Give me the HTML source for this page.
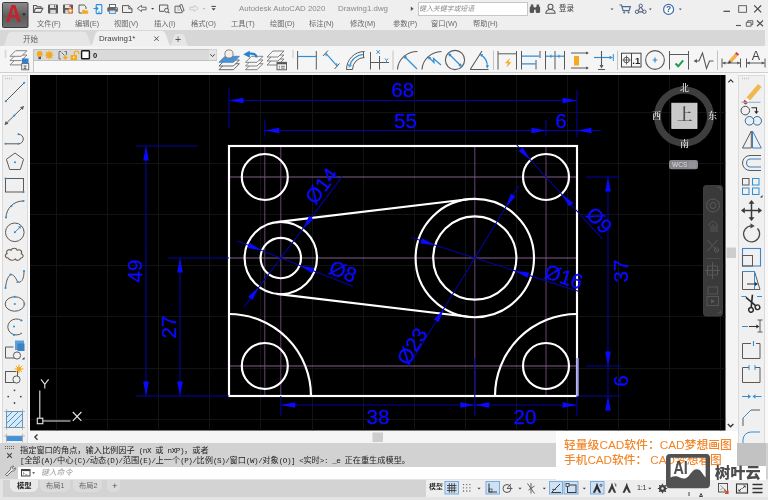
<!DOCTYPE html><html lang="zh"><head><meta charset="utf-8"><title>Autodesk AutoCAD 2020 - Drawing1.dwg</title><style>
*{margin:0;padding:0;box-sizing:border-box}
html,body{width:768px;height:500px;overflow:hidden;background:#f0f0f0}
body{position:relative;font-family:"Liberation Sans","Noto Sans CJK SC",sans-serif;font-size:8.5px;color:#444}
.a{position:absolute}
.cv{position:absolute;left:0;top:0;will-change:transform}
.t{position:absolute;white-space:nowrap;line-height:1;will-change:transform}
.m{font-size:7.6px;letter-spacing:-0.44px}
</style></head><body>
<div class="a" style="left:0;top:0;width:768px;height:31px;background:#efefef"></div>
<div class="a" style="left:0;top:29.500px;width:765px;height:16.500px;background:#d7d7d7"></div>
<div class="a" style="left:0;top:46px;width:768px;height:29px;background:#f5f5f5"></div>
<div class="a" style="left:0;top:72px;width:768px;height:1px;background:#d0d0d0"></div>
<div class="a" style="left:0;top:73px;width:30px;height:370px;background:#f9f9f9"></div>
<div class="a" style="left:1.500px;top:75px;width:26.500px;height:368px;border:1px solid #dadada;border-bottom:0;background:#f0f0f0"></div>
<div class="a" style="left:725px;top:73px;width:13px;height:358px;background:#f4f4f4"></div>
<div class="a" style="left:738px;top:73px;width:30px;height:370px;background:#f9f9f9"></div>
<div class="a" style="left:738px;top:75px;width:26.500px;height:368px;border:1px solid #dadada;border-bottom:0;background:#f0f0f0"></div>
<div class="a" style="left:30px;top:430px;width:708px;height:13px;background:#f5f5f5"></div>
<div class="a" style="left:0;top:442.500px;width:768px;height:24.500px;background:#d2d2d2"></div>
<div class="a" style="left:0;top:467px;width:768px;height:12px;background:#d2d2d2"></div>
<div class="a" style="left:18px;top:467px;width:540px;height:12px;background:#fff"></div>
<div class="a" style="left:0;top:479px;width:768px;height:21px;background:#e4e4e4"></div>
<div class="a" style="left:3px;top:479.500px;width:423px;height:17px;background:#d3d3d3"></div>
<div class="a" style="left:426px;top:479.500px;width:342px;height:17.500px;background:#eeeeee"></div>
<svg class="cv" width="768" height="500" viewBox="0 0 768 500">
<rect x="30" y="75" width="695.5" height="355.5" fill="#000"/>
<clipPath id="cc"><rect x="30" y="75" width="695.5" height="355.5"/></clipPath>
<g clip-path="url(#cc)">
<path d="M56.5 75V430.5M107.5 75V430.5M158.5 75V430.5M209.5 75V430.5M260.5 75V430.5M312.5 75V430.5M363.5 75V430.5M414.5 75V430.5M465.5 75V430.5M516.5 75V430.5M567.5 75V430.5M618.5 75V430.5M669.5 75V430.5M720.5 75V430.5M30 112.5H725.5M30 163.5H725.5M30 214.5H725.5M30 265.5H725.5M30 316.5H725.5M30 368.5H725.5M30 419.5H725.5" stroke="#121315" stroke-width="1" fill="none"/>
<path d="M229 177H577M229 258H577M229 366H577" stroke="#9a72a2" stroke-width="0.85" fill="none"/>
<path d="M264.8 146V396M280.8 146V396M474.8 146V396M546 146V396" stroke="#7c5086" stroke-width="0.85" fill="none"/>
<g stroke="#fff" stroke-width="2.15" fill="none">
<rect x="229" y="146" width="348" height="250"/>
<circle cx="264.8" cy="177" r="23"/>
<circle cx="546" cy="177" r="23"/>
<circle cx="264.8" cy="366" r="23"/>
<circle cx="546" cy="366" r="23"/>
<circle cx="280.8" cy="258" r="36.2"/>
<circle cx="280.8" cy="258" r="20.2"/>
<circle cx="474.8" cy="258" r="59.2"/>
<circle cx="474.8" cy="258" r="41.6"/>
<path d="M276.5 222.1L467.8 199.2M276.5 293.9L467.8 316.8"/>
<path d="M229 314A82 82 0 0 1 311 396"/>
<path d="M577 314A82 82 0 0 0 495 396"/>
</g>
<g stroke="#0404a4" stroke-width="1.05" fill="none">
<path d="M229 100.5L577 100.5M229 88L229 128M577 90L577 137M264.8 130.5L546 130.5M264.8 120L264.8 136.5M546 120L546 136.5M546 130.5L601 130.5M146 146L146 396M136 146L198 146M136 396L229 396M180 258L180 396M168 258L229 258M608 177L608 366M586 177L619 177M586 366L621 366M608 354L608 409M577 396L621 396M280.8 405L577 405M280.8 396L280.8 416M474.8 358L474.8 416M577 396L577 416M244 306.9L342.3 176.4M236.9 240.8L352.7 286.2M518.7 186.1L410.1 364M411.4 237.6L578.2 291.2M516.4 144.5L602.5 239.1"/>
</g>
<g fill="#0a0aff" stroke="none">
<polygon points="229,100.5 243.5,103.2 243.5,97.8"/><polygon points="577,100.5 562.5,97.8 562.5,103.2"/><polygon points="264.8,130.5 279.3,133.2 279.3,127.8"/><polygon points="546,130.5 531.5,127.8 531.5,133.2"/><polygon points="577,130.5 591.5,133.2 591.5,127.8"/><polygon points="146,146 143.2,160.5 148.8,160.5"/><polygon points="146,396 148.8,381.5 143.2,381.5"/><polygon points="180,258 177.2,272.5 182.8,272.5"/><polygon points="180,396 182.8,381.5 177.2,381.5"/><polygon points="608,177 605.2,191.5 610.8,191.5"/><polygon points="608,366 610.8,351.5 605.2,351.5"/><polygon points="608,396 605.2,410.5 610.8,410.5"/><polygon points="280.8,405 295.3,407.8 295.3,402.2"/><polygon points="474.8,405 460.3,402.2 460.3,407.8"/><polygon points="474.8,405 489.3,407.8 489.3,402.2"/><polygon points="577,405 562.5,402.2 562.5,407.8"/>
<polygon points="302.6,229.1 313.5,219.2 309.1,215.9"/><polygon points="259,286.9 248.1,296.8 252.5,300.1"/><polygon points="299.6,265.4 312.1,273.2 314.1,268.1"/><polygon points="262,250.6 249.5,242.8 247.5,247.9"/><polygon points="444,308.5 434.1,319.5 438.7,322.3"/><polygon points="505.6,207.5 515.5,196.5 510.9,193.7"/><polygon points="514.4,270.7 527.4,277.8 529.1,272.5"/><polygon points="435.2,245.3 422.2,238.2 420.5,243.5"/><polygon points="561.5,194 569.2,206.6 573.3,202.9"/><polygon points="530.5,160 522.8,147.4 518.7,151.1"/>
</g>
<path d="M577.5 358V396" stroke="#9a9ae6" stroke-width="2.4"/>
<g fill="#0a0aff" stroke="#0a0aff" stroke-width="0.35" font-family="Liberation Sans, Arial, sans-serif" font-size="20.5" text-anchor="middle" style="font-weight:400">
<text x="402.7" y="96.6">68</text>
<text x="405.4" y="127.8">55</text>
<text x="561" y="127.8">6</text>
<text transform="translate(142 271) rotate(-90)" x="0" y="0">49</text>
<text transform="translate(176 327) rotate(-90)" x="0" y="0">27</text>
<text transform="translate(628 271) rotate(-90)" x="0" y="0">37</text>
<text transform="translate(628 381) rotate(-90)" x="0" y="0">6</text>
<text x="378" y="424">38</text>
<text x="525" y="424">20</text>
<text transform="translate(327 190) rotate(-53)" x="0" y="0">Ø14</text>
<text transform="translate(340.5 278) rotate(21.4)" x="0" y="0">Ø8</text>
<text transform="translate(418 350) rotate(-58.6)" x="0" y="0">Ø23</text>
<text transform="translate(561.5 283.5) rotate(17.8)" x="0" y="0">Ø16</text>
<text transform="translate(594 225) rotate(47.7)" x="0" y="0">Ø9</text>
</g>
<g stroke="#e8e8e8" stroke-width="1.1" fill="none">
<path d="M39.800 418V390.500M43 421H70.500"/><rect x="37.300" y="418.200" width="5.500" height="5.500"/>
<path d="M41 379.300l3.800 5l3.800-5M44.800 384.300v4.200"/>
<path d="M72.800 412l8.600 8.800M81.400 412l-8.600 8.800"/>
</g>
</g>
</svg>
<svg class="cv" width="768" height="500" viewBox="0 0 768 500"><path d="M2.500 46C7 46 5 31.800 12 31.800H83C90 31.800 88 46 94 46z" fill="#e6e6e6"/><path d="M89 46.500C95 46.500 93 31 99 31H162C168 31 166.500 46.500 173 46.500z" fill="#f0f0f0"/><path d="M169.500 46c3.500 0 3-12 6.500-12h6.500c3.500 0 3 12 6.500 12z" fill="#e6e6e6"/><circle cx="684" cy="116.5" r="26.5" fill="none" stroke="#3e3e3e" stroke-width="7" /><rect x="671.8" y="103.2" width="25.2" height="25.2" fill="#c9c9c9" stroke="#dedede" stroke-width="0.8" rx="0" /><rect x="669" y="160" width="29" height="9.3" fill="#85858c" stroke="none" stroke-width="0" rx="2.2" /><rect x="688.5" y="161.2" width="8" height="7" fill="#93939a" stroke="none" stroke-width="0" rx="1.2" /><rect x="703.5" y="185.5" width="19" height="130.5" fill="#3a3a3a" stroke="#454545" stroke-width="0.8" rx="2.5" /><circle cx="713" cy="205.5" r="6.5" fill="none" stroke="#5a5a5a" stroke-width="1" /><circle cx="713" cy="205.5" r="3" fill="none" stroke="#5a5a5a" stroke-width="1" /><path d="M717.500 187.500h3v3" stroke="#5a5a5a" stroke-width="0.8" fill="none" /><path d="M709 226c0-6 8-6 8 0v6M711 226v6M713 224v8M715 226v6" stroke="#5a5a5a" stroke-width="0.9" fill="none" /><path d="M707.500 240l10 11M717.500 240l-10 11" stroke="#5a5a5a" stroke-width="1" fill="none" /><circle cx="716.5" cy="250" r="2.2" fill="none" stroke="#5a5a5a" stroke-width="0.9" /><path d="M706 258.500h14" stroke="#555" stroke-width="0.6" fill="none" /><path d="M707.500 266h10v9h-10zM712.500 262v17M705 270.500h15" stroke="#5a5a5a" stroke-width="0.9" fill="none" /><rect x="708" y="287" width="9.5" height="7" fill="none" stroke="#5a5a5a" stroke-width="0.9" rx="0" /><rect x="707" y="296.5" width="11.5" height="9" fill="none" stroke="#5a5a5a" stroke-width="0.9" rx="0" /><path d="M711 299l4 2.200-4 2.200z" fill="#5a5a5a"/><path d="M718 313l2.500 0 0-2.500" stroke="#5a5a5a" stroke-width="0.8" fill="none" /><rect x="445" y="481.5" width="13.5" height="12.5" fill="#cfe2f5" stroke="#6fa6d8" stroke-width="0.9" rx="0" /><rect x="486" y="481.5" width="13.5" height="12.5" fill="#cfe2f5" stroke="#6fa6d8" stroke-width="0.9" rx="0" /><rect x="549.5" y="481.5" width="13" height="12.5" fill="#cfe2f5" stroke="#6fa6d8" stroke-width="0.9" rx="0" /><rect x="564" y="481.5" width="14" height="12.5" fill="#cfe2f5" stroke="#6fa6d8" stroke-width="0.9" rx="0" /><rect x="590.5" y="481.5" width="13.5" height="12.5" fill="#cfe2f5" stroke="#6fa6d8" stroke-width="0.9" rx="0" /></svg><div class="t" style="left:239px;top:5px;font-size:7.8px;color:#8a8a8a;">Autodesk AutoCAD 2020</div>
<div class="t" style="left:337.5px;top:5px;font-size:7.9px;color:#8a8a8a;">Drawing1.dwg</div>
<div class="a" style="left:417.500px;top:1.500px;width:110px;height:14px;background:#fff;border:1px solid #c6c6c6"></div>
<div class="t" style="left:419px;top:6px;font-size:6.9px;color:#8a8a8a;font-style:italic">键入关键字或短语</div>
<div class="t" style="left:559px;top:5.2px;font-size:7.5px;color:#3a3a3a;">登录</div>
<div class="t" style="left:36.5px;top:20.3px;font-size:7.25px;color:#686868;">文件(F)</div>
<div class="t" style="left:75px;top:20.3px;font-size:7.25px;color:#686868;">编辑(E)</div>
<div class="t" style="left:114px;top:20.3px;font-size:7.25px;color:#686868;">视图(V)</div>
<div class="t" style="left:153.5px;top:20.3px;font-size:7.25px;color:#686868;">插入(I)</div>
<div class="t" style="left:190.5px;top:20.3px;font-size:7.25px;color:#686868;">格式(O)</div>
<div class="t" style="left:231px;top:20.3px;font-size:7.25px;color:#686868;">工具(T)</div>
<div class="t" style="left:269.5px;top:20.3px;font-size:7.25px;color:#686868;">绘图(D)</div>
<div class="t" style="left:309px;top:20.3px;font-size:7.25px;color:#686868;">标注(N)</div>
<div class="t" style="left:350px;top:20.3px;font-size:7.25px;color:#686868;">修改(M)</div>
<div class="t" style="left:392.5px;top:20.3px;font-size:7.25px;color:#686868;">参数(P)</div>
<div class="t" style="left:431px;top:20.3px;font-size:7.25px;color:#686868;">窗口(W)</div>
<div class="t" style="left:473px;top:20.3px;font-size:7.25px;color:#686868;">帮助(H)</div>
<div class="t" style="left:22.5px;top:35.6px;font-size:7.5px;color:#606060;">开始</div>
<div class="t" style="left:98.7px;top:35.2px;font-size:7.9px;color:#444;">Drawing1*</div>
<div class="t" style="left:175.3px;top:33.5px;font-size:10.5px;color:#555;">+</div>
<div class="a" style="left:33px;top:48.500px;width:184px;height:12.500px;background:#dadada;border:1px solid #c2c2c2"></div>
<div class="a" style="left:33px;top:61px;width:184px;height:11px;background:#f8f8f8;border-left:1px solid #c8c8c8"></div>
<div class="t" style="left:92.7px;top:51.8px;font-size:7.6px;color:#1a1a1a;font-weight:700">0</div>
<div class="t" style="left:19.5px;top:447.3px;font-size:8.2px;color:#222;font-family:'Liberation Mono','Noto Sans CJK SC',monospace">指定窗口的角点，输入比例因子<span class="m"> (nX </span>或<span class="m"> nXP)</span>，或者</div>
<div class="t" style="left:19.5px;top:457.1px;font-size:8.2px;color:#222;font-family:'Liberation Mono','Noto Sans CJK SC',monospace"><span class="m">[</span>全部<span class="m">(A)/</span>中心<span class="m">(C)/</span>动态<span class="m">(D)/</span>范围<span class="m">(E)/</span>上一个<span class="m">(P)/</span>比例<span class="m">(S)/</span>窗口<span class="m">(W)/</span>对象<span class="m">(O)] &lt;</span>实时<span class="m">&gt;: _e </span>正在重生成模型。</div>
<div class="t" style="left:41px;top:468.6px;font-size:7.8px;color:#9a9a9a;font-style:italic">键入命令</div>
<div class="a" style="left:10px;top:479.500px;width:28px;height:12px;background:#e9e9e9;border-radius:0 0 6px 6px"></div>
<div class="a" style="left:40px;top:479.500px;width:30px;height:12px;background:#dbdbdb;border-radius:0 0 6px 6px"></div>
<div class="a" style="left:73px;top:479.500px;width:29px;height:12px;background:#dbdbdb;border-radius:0 0 6px 6px"></div>
<div class="a" style="left:107px;top:479.500px;width:13px;height:12px;background:#dbdbdb;border-radius:0 0 5px 5px"></div>
<div class="t" style="left:16.8px;top:482px;font-size:7.3px;color:#222;font-weight:700">模型</div>
<div class="t" style="left:45.8px;top:482px;font-size:7.2px;color:#666;">布局1</div>
<div class="t" style="left:79.2px;top:482px;font-size:7.2px;color:#666;">布局2</div>
<div class="t" style="left:111.5px;top:480.5px;font-size:9.5px;color:#555;">+</div>
<div class="t" style="left:428.7px;top:484.3px;font-size:6.9px;color:#111;font-weight:500">模型</div>
<div class="t" style="left:637px;top:484.3px;font-size:7.2px;color:#333;letter-spacing:-0.3px">1:1</div>
<div class="a" style="left:556px;top:431px;width:182px;height:49px;background:#fff"></div><div class="a" style="left:737px;top:466px;width:29px;height:14px;background:#fff"></div>
<div class="t" style="left:563.5px;top:439.5px;font-size:11.8px;color:#f2862a;font-weight:500">轻量级CAD软件：CAD梦想画图</div>
<div class="t" style="left:563.5px;top:453.8px;font-size:11.7px;color:#f2862a;font-weight:500">手机CAD软件： CAD梦想看图</div>
<div class="a" style="left:737px;top:443px;width:28.500px;height:23px;background:#c2c2c2"></div>
<div class="t" style="left:715px;top:465.3px;font-size:15.2px;color:#4d4d4d;font-weight:900">树叶云</div>
<div class="t" style="left:679.5px;top:84.3px;font-size:9px;color:#dcdcdc;font-weight:600;font-family:'Liberation Serif','Noto Serif CJK SC',serif">北</div>
<div class="t" style="left:679.5px;top:139.8px;font-size:9px;color:#dcdcdc;font-weight:600;font-family:'Liberation Serif','Noto Serif CJK SC',serif">南</div>
<div class="t" style="left:651.7px;top:111.8px;font-size:9px;color:#dcdcdc;font-weight:600;font-family:'Liberation Serif','Noto Serif CJK SC',serif">西</div>
<div class="t" style="left:707.7px;top:111.8px;font-size:9px;color:#dcdcdc;font-weight:600;font-family:'Liberation Serif','Noto Serif CJK SC',serif">东</div>
<div class="t" style="left:677px;top:107.3px;font-size:15.5px;color:#4a4a4a;font-weight:600;font-family:'Liberation Serif','Noto Serif CJK SC',serif">上</div>
<div class="t" style="left:672px;top:161.6px;font-size:6.6px;color:#dedede;">WCS</div><svg class="cv" width="768" height="500" viewBox="0 0 768 500"><defs><linearGradient id="ab" x1="0" y1="0" x2="0" y2="1"><stop offset="0" stop-color="#8c8c8c"/><stop offset="0.55" stop-color="#5c5c5c"/><stop offset="1" stop-color="#6e6e6e"/></linearGradient></defs><rect x="2.5" y="2.5" width="25.5" height="25" fill="url(#ab)" stroke="#3e3e3e" stroke-width="1" rx="1" /><text x="13.5" y="21.7" font-family="Liberation Sans,Arial,sans-serif" font-weight="700" font-size="24.5" fill="#c4232c" text-anchor="middle" transform="translate(13.5 0) scale(0.9 1) translate(-13.5 0)">A</text><path d="M22.1 13.55h3.8l-1.9 2.09z" fill="#1e1e1e"/><path d="M33.5 12.3V5.5h2.8l1 1.2h3.7v1.6M33.6 12.4l1.9-4h7.3l-2 4z" stroke="#5a5a5a" stroke-width="1.1" fill="none" /><rect x="48" y="4.5" width="10" height="9" fill="#5a5a5a" stroke="none" stroke-width="0" rx="0.8" /><rect x="50" y="5" width="6" height="3" fill="#e6e6e6" stroke="none" stroke-width="1" rx="0" /><rect x="50.3" y="9.8" width="5.4" height="3.7" fill="#dadada" stroke="none" stroke-width="1" rx="0" /><rect x="54" y="5.3" width="1.2" height="2.2" fill="#5a5a5a" stroke="none" stroke-width="1" rx="0" /><rect x="63" y="4.5" width="10" height="9" fill="#5a5a5a" stroke="none" stroke-width="0" rx="0.8" /><rect x="65" y="5" width="6" height="3" fill="#e6e6e6" stroke="none" stroke-width="1" rx="0" /><rect x="65.3" y="9.8" width="3.4" height="3.7" fill="#dadada" stroke="none" stroke-width="1" rx="0" /><circle cx="70.3" cy="10.8" r="2.7" fill="#e8862a" stroke="none" stroke-width="1" /><path d="M68.6 10.8h3.4M70.3 9.1v3.4" stroke="#fff" stroke-width="0.9" fill="none" /><rect x="69.5" y="5" width="1.2" height="2.2" fill="#c23" stroke="none" stroke-width="1" rx="0" /><path d="M79 5h5.2l1.8 1.8V9M79 5v8h3" stroke="#5a5a5a" stroke-width="1" fill="none" /><path d="M82.5 10h2l.7.8h2.6v2.7h-5.3z" stroke="#f4a91f" stroke-width="0.6" fill="#f4a91f" /><rect x="96.2" y="4.6" width="5.6" height="9" fill="#eef5fb" stroke="#2f8fd6" stroke-width="1.1" rx="0.8" /><path d="M93.5 8.5h4.2M96.4 7l1.5 1.5-1.5 1.5" stroke="#2f8fd6" stroke-width="1.1" fill="none" /><path d="M97.8 12.1h2.4" stroke="#2f8fd6" stroke-width="0.9" fill="none" /><rect x="109.5" y="4.5" width="6" height="3" fill="#fff" stroke="#5a5a5a" stroke-width="0.9" rx="0" /><rect x="107.3" y="7.2" width="10.6" height="4.6" fill="#666" stroke="none" stroke-width="0" rx="1" /><rect x="109.5" y="10.2" width="6" height="3.4" fill="#cfe4f5" stroke="#5a87ad" stroke-width="0.8" rx="0" /><circle cx="116.2" cy="8.6" r="0.6" fill="#fff" stroke="none" stroke-width="1" /><path d="M122.5 12.5V5.6h6.3l3.2 3.2v3.7zM128.8 5.6v3.2h3.2" stroke="#5a5a5a" stroke-width="1" fill="none" /><path d="M137.3 8.4l4.2-3v1.8h4.6v2.6h-4.6v1.7z" stroke="#5a5a5a" stroke-width="0.9" fill="#f4f4f4" /><path d="M151.1 8.05h3.0l-1.5 1.6500000000000001z" fill="#444"/><path d="M159.5 5h8.3v4M159.5 5v6.3h4.5" stroke="#5a5a5a" stroke-width="1" fill="none" /><circle cx="166.5" cy="10.3" r="2" fill="none" stroke="#5a5a5a" stroke-width="1" /><path d="M168 11.8l1.5 1.4" stroke="#5a5a5a" stroke-width="1.1" fill="none" /><path d="M175 12.7V6.2h5.2M175 12.7h7.5M179.6 5.2l2.2-.8 2.3 6.2-2.2.9z" stroke="#5a5a5a" stroke-width="0.95" fill="none" /><path d="M177 8h2M177 10h3" stroke="#999" stroke-width="0.7" fill="none" /><path d="M198.2 8.4l-4.2-3v1.8h-4.2v2.6h4.2v1.7z" stroke="#c6c6c6" stroke-width="0.9" fill="#efefef" /><path d="M202.5 8.05h3.0l-1.5 1.6500000000000001z" fill="#bbb"/><path d="M211.3 6.4h4.6" stroke="#444" stroke-width="1" fill="none" /><path d="M211.6 8.3h4l-2 2.2z" fill="#444"/><path d="M410.800 6.500l2.800 2.300-2.800 2.300z" fill="#555"/><rect x="529.7" y="6.5" width="4.4" height="6.5" fill="#555" stroke="none" stroke-width="0" rx="1.3" /><rect x="535.7" y="6.5" width="4.4" height="6.5" fill="#555" stroke="none" stroke-width="0" rx="1.3" /><rect x="530.8" y="4.5" width="2.5" height="3" fill="#555" stroke="none" stroke-width="1" rx="0" /><rect x="536.6" y="4.5" width="2.5" height="3" fill="#555" stroke="none" stroke-width="1" rx="0" /><rect x="533.6" y="7.5" width="2.6" height="2.2" fill="#555" stroke="none" stroke-width="1" rx="0" /><circle cx="550.5" cy="6.8" r="2.5" fill="none" stroke="#5a5a5a" stroke-width="1.1" /><path d="M545.8 13.3c.4-3 2.3-3.8 4.7-3.8s4.3.8 4.7 3.8z" stroke="#5a5a5a" stroke-width="1.1" fill="none" /><path d="M610.5 8.55h3.0l-1.5 1.6500000000000001z" fill="#555"/><path d="M619.5 5h2l1.6 5.6h6l1.3-4h-8.2" stroke="#4a6d8c" stroke-width="1.2" fill="none" /><circle cx="624.2" cy="12.4" r="1" fill="#4a6d8c" stroke="none" stroke-width="1" /><circle cx="628.6" cy="12.4" r="1" fill="#4a6d8c" stroke="none" stroke-width="1" /><path d="M640.700 6.500l-3.200 5.400h6.400z" stroke="#4a5f78" stroke-width="1.1" fill="none" /><circle cx="640.7" cy="5.8" r="1.7" fill="#f0f0f0" stroke="#4a5f78" stroke-width="1" /><circle cx="637" cy="11.8" r="1.7" fill="#f0f0f0" stroke="#4a5f78" stroke-width="1" /><circle cx="644.4" cy="11.8" r="1.7" fill="#f0f0f0" stroke="#4a5f78" stroke-width="1" /><path d="M648.9 8.600000000000001h2.8l-1.4 1.54z" fill="#555"/><circle cx="668.6" cy="9.4" r="5" fill="#fdfdfd" stroke="#3d6fa8" stroke-width="1.2" /><text x="668.600" y="12.400" font-family="Liberation Sans,Arial,sans-serif" font-weight="700" font-size="8.5" fill="#2d5f98" text-anchor="middle">?</text><path d="M678.9 8.600000000000001h2.8l-1.4 1.54z" fill="#555"/><path d="M723.500 11.300h6.500" stroke="#444" stroke-width="1.2" fill="none" /><rect x="738.7" y="5.7" width="7.8" height="6.6" fill="none" stroke="#555" stroke-width="0.9" rx="0" /><path d="M754.2 5.300l7 7M761.2 5.300l-7 7" stroke="#444" stroke-width="1.2" fill="none" /><path d="M736 25.500h5" stroke="#555" stroke-width="1.1" fill="none" /><path d="M746.300 22.300h4.800v3.900h-4.800zM747.800 22.300v-1.600h5v3.900h-1.700" stroke="#555" stroke-width="0.9" fill="none" /><path d="M757 20.500l6 5.800M763 20.500l-6 5.800" stroke="#555" stroke-width="1.2" fill="none" /><path d="M154.3 36.5l4.4 4.4M158.7 36.5l-4.4 4.4" stroke="#555" stroke-width="1" fill="none" /><path d="M5.500 50.500v8" stroke="#b8b8b8" stroke-width="1.6" fill="none" stroke-dasharray="1 1"/><path d="M293 50.500v8" stroke="#b8b8b8" stroke-width="1.6" fill="none" stroke-dasharray="1 1"/><path d="M10 64.89999999999999l5.6 -5.6h11.3l-5.6 5.6z" stroke="#707070" stroke-width="0.85" fill="#f6f6f6" /><path d="M10 60.599999999999994l5.6 -5.6h11.3l-5.6 5.6z" stroke="#707070" stroke-width="0.85" fill="#f6f6f6" /><path d="M10 56.3l5.6 -5.6h11.3l-5.6 5.6z" stroke="#707070" stroke-width="0.85" fill="#f6f6f6" /><rect x="22" y="58.5" width="6.5" height="5" fill="#2f7fd0" stroke="none" stroke-width="1" rx="0" /><rect x="21.7" y="63.6" width="7" height="6.2" fill="#f4f4f4" stroke="#666" stroke-width="0.9" rx="0" /><path d="M23.5 66h3M25 66v2.5M23.5 68.5h3" stroke="#555" stroke-width="0.8" fill="none" /><circle cx="39.7" cy="54" r="2.9" fill="#f4a91f" stroke="none" stroke-width="1" /><rect x="38.4" y="56.6" width="2.6" height="2.6" fill="#555" stroke="none" stroke-width="1" rx="0" /><path d="M38.6 55.3l1.1 1 1.1-1" stroke="#fbd27a" stroke-width="0.6" fill="none" /><circle cx="49.2" cy="55" r="2.9" fill="#f4a91f" stroke="none" stroke-width="1" /><path d="M49.2 50.800v8.400M45 55h8.400M46.200 52l6 6M52.200 52l-6 6" stroke="#f4a91f" stroke-width="1.1" fill="none" /><path d="M59 51.5v7.5M59 51.5h2M59 59h2M66.5 51.5h-2M66.5 51.5v3.5M61.5 52.5l3 3" stroke="#666" stroke-width="0.9" fill="none" /><circle cx="65.3" cy="57.6" r="1.7" fill="#f4a91f" stroke="none" stroke-width="1" /><path d="M65.3 54.9v5.4M62.6 57.6h5.4" stroke="#f4a91f" stroke-width="0.7" fill="none" /><rect x="70.5" y="55" width="6.6" height="5" fill="#f4a91f" stroke="none" stroke-width="0" rx="0.6" /><path d="M74.3 55v-1.8a2.2 2.2 0 0 1 4.4 0v.8" stroke="#f4a91f" stroke-width="1.2" fill="none" /><circle cx="73.8" cy="57.4" r="0.8" fill="#fff" stroke="none" stroke-width="1" /><rect x="81.6" y="50.8" width="7.8" height="8" fill="#fff" stroke="#1a1a1a" stroke-width="1.4" rx="0.8" /><rect x="209" y="49.5" width="7.5" height="10.5" fill="#e4e4e4" stroke="none" stroke-width="1" rx="0" /><path d="M210.300 54.300l2.200 2.300 2.200-2.300" stroke="#444" stroke-width="1" fill="none" /><path d="M219 69.7l6 -6h14.4l-6 6z" stroke="#5a5a5a" stroke-width="0.9" fill="#f6f6f6" /><path d="M219 66.0l6 -6h14.4l-6 6z" stroke="#5a5a5a" stroke-width="0.9" fill="#f6f6f6" /><path d="M219 62.3l6 -6h14.4l-6 6z" stroke="#4a86c4" stroke-width="0.9" fill="#4a92d6" /><circle cx="229" cy="54" r="4.1" fill="#f6efe8" stroke="#777" stroke-width="0.9" /><path d="M245.5 69.7l6 -6h11.5l-6 6z" stroke="#707070" stroke-width="0.85" fill="#f6f6f6" /><path d="M245.5 66.0l6 -6h11.5l-6 6z" stroke="#707070" stroke-width="0.85" fill="#f6f6f6" /><path d="M245.5 62.3l6 -6h11.5l-6 6z" stroke="#707070" stroke-width="0.85" fill="#f6f6f6" /><path d="M256.500 57.500c0-3-2.500-4.500-7.500-3.800" stroke="#2a7fcf" stroke-width="2.2" fill="none" /><path d="M243.2 54.300l6.600-3.600v7z" fill="#2a7fcf"/><path d="M267 65l6 -6h11l-6 6z" stroke="#707070" stroke-width="0.85" fill="#f6f6f6" /><path d="M267 61l6 -6h11l-6 6z" stroke="#707070" stroke-width="0.85" fill="#f6f6f6" /><path d="M267 57l6 -6h11l-6 6z" stroke="#707070" stroke-width="0.85" fill="#f6f6f6" /><rect x="277" y="62.3" width="9.5" height="7.5" fill="#f6f6f6" stroke="#555" stroke-width="0.9" rx="0" /><rect x="277" y="62.3" width="9.5" height="2" fill="#555" stroke="none" stroke-width="1" rx="0" /><path d="M278.800 66.300h1.200M281 66.300h3.800M278.800 68.100h1.200M281 68.100h3.800" stroke="#555" stroke-width="0.8" fill="none" /><path d="M297.600 51v18.5M316.300 51v18.5" stroke="#5a5a5a" stroke-width="1" fill="none" /><path d="M298 56.500h18" stroke="#2f8fd6" stroke-width="1.2" fill="none" /><path d="M323 56l5-5.5M334.5 69l5-5.5" stroke="#5a5a5a" stroke-width="1" fill="none" /><path d="M325.7 53.2l11.5 13" stroke="#2f8fd6" stroke-width="1.2" fill="none" /><path d="M325.7 53.2l.5 3M337.2 66.2l-.5-3" stroke="#2f8fd6" stroke-width="1" fill="none" /><path d="M346.5 69.5a18 18 0 0 1 18-18M352.5 69.5a12 12 0 0 1 12-12" stroke="#5a5a5a" stroke-width="1" fill="none" /><path d="M349.5 66.5a15 15 0 0 1 14-12" stroke="#2f8fd6" stroke-width="1.2" fill="none" /><path d="M363.5 51.5v6M346.5 69.5h6" stroke="#5a5a5a" stroke-width="1" fill="none" /><path d="M348 64l1.4 3 2.4-2" stroke="#2f8fd6" stroke-width="0.9" fill="none" /><path d="M370.500 52v17.5M370 62.500h19M379.500 56v13.500" stroke="#5a5a5a" stroke-width="1" fill="none" /><path d="M376.5 50.2l3.4 3.6M379.9 50.2l-3.4 3.6" stroke="#2f8fd6" stroke-width="1" fill="none" /><path d="M385 58.5l1.5 2 1.5-2M386.5 60.5v2.6" stroke="#2f8fd6" stroke-width="1" fill="none" /><path d="M393 50.5v19.5" stroke="#c4c4c4" stroke-width="1" fill="none" /><path d="M397.5 69.5a20 19 0 0 1 20-18" stroke="#5a5a5a" stroke-width="1.1" fill="none" /><path d="M404.5 56.5l12.5 12.5" stroke="#2f8fd6" stroke-width="1.2" fill="none" /><path d="M403.6 55.6l3.6 1.2-2.4 2.4z" fill="#2f8fd6"/><path d="M422 69.5a20 19 0 0 1 19.5-18" stroke="#5a5a5a" stroke-width="1.1" fill="none" /><path d="M428.5 57l5.5 5.5-.5-4 7.5 6.5" stroke="#2f8fd6" stroke-width="1.2" fill="none" /><path d="M427.6 56.2l3.6 1.2-2.4 2.4z" fill="#2f8fd6"/><circle cx="455" cy="60" r="9.6" fill="none" stroke="#5a5a5a" stroke-width="1.1" /><path d="M449 54l12 12" stroke="#2f8fd6" stroke-width="1.2" fill="none" /><path d="M448 53l3.7 1.2-2.5 2.5z" fill="#2f8fd6"/><path d="M462 67l-3.7-1.2 2.5-2.5z" fill="#2f8fd6"/><path d="M470 69.5h18.5M470.5 69l11.5-18" stroke="#5a5a5a" stroke-width="1.1" fill="none" /><path d="M480.5 54.5a14 14 0 0 1 6.8 13" stroke="#2f8fd6" stroke-width="1.2" fill="none" /><path d="M487.4 68.6l-1.6-3.3h3.2z" fill="#2f8fd6"/><path d="M479.6 53.7l3.5.6-1.7 2.6z" fill="#2f8fd6"/><path d="M493.5 50.5v19.5" stroke="#c4c4c4" stroke-width="1" fill="none" /><path d="M498 51v18.5M516.5 51v18.5M498 53.800h18.500" stroke="#5a5a5a" stroke-width="1" fill="none" /><path d="M509.5 58.5l-4.5 4.8h3l-1.6 4.5 5-5.5h-3l1.6-3.8z" fill="#f4a91f"/><path d="M521.5 51v18.5M536 60v9.5M540 51v7" stroke="#5a5a5a" stroke-width="1" fill="none" /><path d="M522 56.200h17.5M522 63.800h13.5" stroke="#2f8fd6" stroke-width="1.2" fill="none" /><path d="M545.5 51v18.5M555 51v18.5M564.5 51v18.5" stroke="#5a5a5a" stroke-width="1" fill="none" /><path d="M546 56.200h18" stroke="#2f8fd6" stroke-width="1.2" fill="none" /><path d="M551 54.700v3M559 54.700v3" stroke="#2f8fd6" stroke-width="1" fill="none" /><rect x="574" y="56" width="5" height="9.5" fill="#f4a91f" stroke="none" stroke-width="1" rx="0" /><path d="M571 53h17M571 68h17" stroke="#5a5a5a" stroke-width="1" fill="none" /><path d="M589 53l-3-1.6v3.2zM589 68l-3-1.6v3.2z" fill="#5a5a5a"/><path d="M594 57.500h17" stroke="#2f8fd6" stroke-width="1.2" fill="none" /><path d="M613 57.500l-3.400-1.800v3.600z" fill="#2f8fd6"/><path d="M601.500 51v15M598 69.5h7" stroke="#5a5a5a" stroke-width="1.1" fill="none" /><path d="M601.500 68.5l-2-3.5h4z" fill="#5a5a5a"/><path d="M613.300 54v7" stroke="#2f8fd6" stroke-width="1" fill="none" /><path d="M617.5 50.5v19.5" stroke="#c4c4c4" stroke-width="1" fill="none" /><rect x="621.5" y="53.2" width="19.5" height="13.8" fill="#f8f8f8" stroke="#444" stroke-width="1" rx="0" /><path d="M631.500 53.200v13.800" stroke="#444" stroke-width="1" fill="none" /><circle cx="626.5" cy="60" r="2.8" fill="none" stroke="#444" stroke-width="0.9" /><path d="M626.5 55.500v9M622.5 60h8" stroke="#444" stroke-width="0.8" fill="none" /><text x="636.300" y="64" font-family="Liberation Sans,Arial,sans-serif" font-weight="700" font-size="9.5" fill="#222" text-anchor="middle">.1</text><circle cx="655" cy="60" r="9.4" fill="none" stroke="#5a5a5a" stroke-width="1.1" /><path d="M652.6 60h4.8M655 57.6v4.8" stroke="#2f8fd6" stroke-width="1.2" fill="none" /><path d="M669.5 51v18.5M688.5 51v18.5M669.5 54.5h19" stroke="#5a5a5a" stroke-width="1" fill="none" /><path d="M675.5 63.5l2.7 2.8 5-6" stroke="#1f9a4c" stroke-width="2" fill="none" /><path d="M695 61h4l3.5-8 4 15.5 3-7.5h4" stroke="#5a5a5a" stroke-width="1.1" fill="none" /><path d="M693.5 61l3.5-2v4z" fill="#5a5a5a"/><path d="M717.5 50.5v19.5" stroke="#c4c4c4" stroke-width="1" fill="none" /><path d="M722 58.5v9M740.5 58.5v9M722.5 63h17.5" stroke="#5a5a5a" stroke-width="1" fill="none" /><path d="M722.3 63l3-1.6v3.2zM740.2 63l-3-1.6v3.2z" fill="#5a5a5a"/><path d="M729 60.2l6-6.8 2.8 2.4-6 6.8z" fill="#f3b04c"/><path d="M735 53.4l1.3-1.5 2.8 2.4-1.3 1.5z" fill="#d9313f"/><path d="M729 60.2l2.8 2.4-3.8 1.2z" fill="#444"/><path d="M746.5 58.5v9M765 58.5v9M747 63h17.5" stroke="#5a5a5a" stroke-width="1" fill="none" /><path d="M746.8 63l3-1.6v3.2zM764.7 63l-3-1.6v3.2z" fill="#5a5a5a"/><text x="755.8" y="60.3" font-family="Liberation Sans,Arial,sans-serif" font-size="12.5" fill="#444" text-anchor="middle">A</text><path d="M5 78.5h8" stroke="#c4c4c4" stroke-width="1.6" fill="none" stroke-dasharray="1 1"/><path d="M6 101l18-18" stroke="#5a5a5a" stroke-width="1" fill="none" /><circle cx="5.8" cy="101.2" r="1.05" fill="#2f8fd6" stroke="none" stroke-width="1" /><circle cx="24.2" cy="82.8" r="1.05" fill="#2f8fd6" stroke="none" stroke-width="1" /><path d="M5 124.5l18.5-18" stroke="#5a5a5a" stroke-width="1" fill="none" /><path d="M4.5 125l1.2-4 2.8 2.8zM24 106l-1.2 4-2.8-2.8z" fill="#5a5a5a"/><circle cx="14.3" cy="115.5" r="1.05" fill="#2f8fd6" stroke="none" stroke-width="1" /><path d="M5.5 143.8h13a4.8 4.8 0 0 0 0-9.6" stroke="#5a5a5a" stroke-width="1" fill="none" /><circle cx="5.5" cy="143.8" r="1.05" fill="#2f8fd6" stroke="none" stroke-width="1" /><circle cx="18.5" cy="143.8" r="1.05" fill="#2f8fd6" stroke="none" stroke-width="1" /><circle cx="18.5" cy="134.2" r="1.05" fill="#2f8fd6" stroke="none" stroke-width="1" /><path d="M15 153l8.6 6.3-3.3 10.2h-10.6l-3.3-10.2z" stroke="#5a5a5a" stroke-width="1" fill="none" /><circle cx="15" cy="162.3" r="1.05" fill="#2f8fd6" stroke="none" stroke-width="1" /><rect x="5.5" y="178.5" width="18" height="13.5" fill="none" stroke="#5a5a5a" stroke-width="1" rx="0" /><circle cx="5.5" cy="178.5" r="1.05" fill="#2f8fd6" stroke="none" stroke-width="1" /><circle cx="23.5" cy="192" r="1.05" fill="#2f8fd6" stroke="none" stroke-width="1" /><path d="M6 217.5a17 17 0 0 1 17.5-16.5" stroke="#5a5a5a" stroke-width="1" fill="none" /><circle cx="6" cy="217.5" r="1.05" fill="#2f8fd6" stroke="none" stroke-width="1" /><circle cx="11.5" cy="206" r="1.05" fill="#2f8fd6" stroke="none" stroke-width="1" /><circle cx="23.5" cy="201" r="1.05" fill="#2f8fd6" stroke="none" stroke-width="1" /><circle cx="14.8" cy="232.3" r="9.3" fill="none" stroke="#5a5a5a" stroke-width="1" /><path d="M14.8 232.3l5-5" stroke="#2f8fd6" stroke-width="1" fill="none" /><circle cx="14.8" cy="232.3" r="1.05" fill="#2f8fd6" stroke="none" stroke-width="1" /><path d="M21 226l-.6 3-2.4-2.4z" fill="#2f8fd6"/><path d="M8 258c-3 0-3.6-3.6-1-4.4-1.4-3 2-5 4-3.4 1-2.6 5.4-2.6 6.2 0 2.6-1.4 5.6 1 4 3.6 2.8.8 2.4 4.4-.6 4.4-.6 2.6-4.4 2.8-5.4.8-1.6 2-5.6 1.6-7.200-1z" stroke="#6a5a4a" stroke-width="1.1" fill="none" /><path d="M5.5 288c1-11 5-16 8.5-12s3 7 6 6 4-6 4-11" stroke="#5a5a5a" stroke-width="1" fill="none" /><circle cx="5.5" cy="288" r="1.05" fill="#2f8fd6" stroke="none" stroke-width="1" /><circle cx="10.5" cy="274.5" r="1.05" fill="#2f8fd6" stroke="none" stroke-width="1" /><circle cx="17.5" cy="282" r="1.05" fill="#2f8fd6" stroke="none" stroke-width="1" /><circle cx="24" cy="271" r="1.05" fill="#2f8fd6" stroke="none" stroke-width="1" /><ellipse cx="14.8" cy="304" rx="9.6" ry="7.2" fill="none" stroke="#5a5a5a" stroke-width="1"/><circle cx="14.8" cy="304" r="1.05" fill="#2f8fd6" stroke="none" stroke-width="1" /><circle cx="14.8" cy="296.8" r="1.05" fill="#2f8fd6" stroke="none" stroke-width="1" /><circle cx="24.4" cy="304" r="1.05" fill="#2f8fd6" stroke="none" stroke-width="1" /><path d="M21.5 320.5a8.6 8 0 1 0 .5 12.500" stroke="#5a5a5a" stroke-width="1" fill="none" /><circle cx="21.5" cy="320.5" r="1.05" fill="#2f8fd6" stroke="none" stroke-width="1" /><circle cx="14" cy="326.5" r="1.05" fill="#2f8fd6" stroke="none" stroke-width="1" /><circle cx="14" cy="335" r="1.05" fill="#2f8fd6" stroke="none" stroke-width="1" /><rect x="15" y="340.5" width="9" height="9.5" fill="#5b9fdc" stroke="none" stroke-width="1" rx="0" /><rect x="17.5" y="343.5" width="7" height="7.5" fill="#3b82c4" stroke="none" stroke-width="1" rx="0" /><path d="M5.500 347v11h11" stroke="#5a5a5a" stroke-width="1" fill="none" /><path d="M5.5 347h8" stroke="#5a5a5a" stroke-width="1" fill="none" /><circle cx="17" cy="355.5" r="3.6" fill="#f2f2f2" stroke="#5a5a5a" stroke-width="1" /><path d="M24.5 359.500l-2.500 0 2.500-2.500z" fill="#333"/><rect x="5.5" y="371.5" width="12" height="11" fill="none" stroke="#5a5a5a" stroke-width="1" rx="0" /><circle cx="16.5" cy="379.5" r="3.6" fill="#f2f2f2" stroke="#5a5a5a" stroke-width="1" /><circle cx="19" cy="369" r="2.2" fill="#f4a91f" stroke="none" stroke-width="1" /><path d="M19 364.500v9M14.500 369h9M15.800 365.800l6.400 6.400M22.200 365.800l-6.400 6.400" stroke="#f4a91f" stroke-width="1" fill="none" /><circle cx="14.5" cy="390.3" r="0.9" fill="#444" stroke="none" stroke-width="1" /><circle cx="8.2" cy="396.6" r="0.9" fill="#444" stroke="none" stroke-width="1" /><circle cx="20.8" cy="396.6" r="0.9" fill="#444" stroke="none" stroke-width="1" /><circle cx="14.5" cy="403" r="0.9" fill="#444" stroke="none" stroke-width="1" /><rect x="6.5" y="411.5" width="16" height="16" fill="#d6ebfa" stroke="#3b8ad0" stroke-width="1" rx="0" /><path d="M6.500 417.500l6-6M6.500 423.500l12-12M8.500 427.500l14-14M14.500 427.500l8-8" stroke="#3b8ad0" stroke-width="0.9" fill="none" /><path d="M4 411.500h21M4 427.500h21M6.500 409v21M22.500 409v21" stroke="#999" stroke-width="0.6" fill="none" /><rect x="6.5" y="436" width="16" height="5" fill="#3f93dc" stroke="none" stroke-width="1" rx="0" /><path d="M4 436h21M6.500 433.500v9M22.500 433.500v9" stroke="#999" stroke-width="0.6" fill="none" /><path d="M742 78.500h8" stroke="#c4c4c4" stroke-width="1.6" fill="none" stroke-dasharray="1 1"/><path d="M746.500 97.500l11.500-13.500 3.600 3-11.500 13.500z" fill="#f3b74f"/><path d="M746.500 97.500l3.600 3-2 2.200-3.400-2.800z" fill="#fff" stroke="#bbb" stroke-width=".4"/><path d="M744.600 99.800l3.400 2.800-1.300 1.500c-1.200 1-3.600-.800-3.300-2.600z" fill="#d0323f"/><path d="M741.500 102.300h19" stroke="#8fb4d6" stroke-width="1.1" fill="none" /><circle cx="745.3" cy="110.6" r="4.3" fill="none" stroke="#4a4a4a" stroke-width="1" /><path d="M751.400 107.700h5.100v4" stroke="#2a2a2a" stroke-width="1.1" fill="none" /><path d="M754.200 111.200h4.400l-2.200 2.800z" fill="#2a2a2a"/><circle cx="757.2" cy="120.8" r="4.3" fill="#e2f1fa" stroke="#3f6488" stroke-width="1" /><circle cx="749.5" cy="120.8" r="4.3" fill="#e2f1fa" stroke="#3f6488" stroke-width="1" /><path d="M751.300 131v17h-8.800z" stroke="#5a5a5a" stroke-width="1" fill="none" /><path d="M752.500 131v17h8.800z" stroke="#3f7fbf" stroke-width="1" fill="none" /><path d="M761 155.500h-11a7.500 7.500 0 0 0 0 15h11" stroke="#5a5a5a" stroke-width="1" fill="none" /><path d="M761 159h-10.500a4 4 0 0 0 0 8h10.500" stroke="#3f7fbf" stroke-width="1.1" fill="none" /><rect x="742.5" y="178.5" width="6.5" height="6.5" fill="none" stroke="#5a5a5a" stroke-width="1" rx="0" /><rect x="752.5" y="178.5" width="6.5" height="6.5" fill="none" stroke="#2f8fd6" stroke-width="1" rx="0" /><rect x="742.5" y="188" width="6.5" height="6.5" fill="none" stroke="#2f8fd6" stroke-width="1" rx="0" /><rect x="752.5" y="188" width="6.5" height="6.5" fill="none" stroke="#2f8fd6" stroke-width="1" rx="0" /><path d="M762.500 197.500l-2.500 0 2.500-2.500z" fill="#333"/><path d="M751.500 202v17M743 210.500h17" stroke="#3a3a3a" stroke-width="1.5" fill="none" /><path d="M751.500 200l3 3.800h-6zM751.500 221l3-3.800h-6zM741 210.500l3.800-3v6zM762 210.500l-3.800-3v6z" fill="#3a3a3a"/><path d="M757.500 228.500a8 8 0 1 1-6-2.600" stroke="#4a4a4a" stroke-width="1.3" fill="none" /><path d="M750.500 223.200l4.200 2.700-4.200 2.700z" fill="#4a4a4a"/><rect x="742.5" y="248.5" width="18" height="17.5" fill="none" stroke="#3f86c8" stroke-width="1.1" rx="0" /><rect x="742.5" y="255.5" width="10" height="10.5" fill="none" stroke="#5a5a5a" stroke-width="1" rx="0" /><path d="M742.500 271.500h12l5.500 18h-17.500z" stroke="#5a5a5a" stroke-width="1" fill="none" /><path d="M742.500 271.500h12v18" stroke="#2f8fd6" stroke-width="1" fill="none" /><path d="M747 284h9" stroke="#333" stroke-width="1" fill="none" /><path d="M758 284l-3-2v4z" fill="#333"/><g transform="rotate(-22 752 303)"><circle cx="748.5" cy="309" r="2.3" fill="none" stroke="#2a2a2a" stroke-width="1.4" /><circle cx="755.5" cy="309" r="2.3" fill="none" stroke="#2a2a2a" stroke-width="1.4" /><path d="M749.500 307l6-11.500M754.500 307l-6-11.500" stroke="#2a2a2a" stroke-width="1.6" fill="none" /></g><path d="M741.500 296.500h5M757 296.500h5" stroke="#2f8fd6" stroke-width="1" fill="none" /><path d="M760 320v12M757.500 320h5M757.500 332h5" stroke="#5a5a5a" stroke-width="1" fill="none" /><path d="M742 326.500h6" stroke="#2f8fd6" stroke-width="1" fill="none" /><path d="M749 326.500h8" stroke="#333" stroke-width="1" fill="none" /><path d="M759.500 326.500l-3.200-2v4z" fill="#333"/><path d="M751 343.500h-8.500v15h17.500v-15h-4" stroke="#5a5a5a" stroke-width="1" fill="none" /><path d="M753.500 341v5" stroke="#2f8fd6" stroke-width="1.1" fill="none" /><path d="M749 367.500h-6.500v15h17.500v-15h-5" stroke="#5a5a5a" stroke-width="1" fill="none" /><path d="M749 365v5M755 365v5" stroke="#2f8fd6" stroke-width="1" fill="none" /><path d="M742 396.500h6M755.500 396.500h6" stroke="#2f8fd6" stroke-width="1" fill="none" /><path d="M748 394.300l3 2.200-3 2.200zM755.500 394.300l-3 2.200 3 2.200z" fill="#2f8fd6"/><path d="M743 426v-8l8-8h9" stroke="#5a5a5a" stroke-width="1" fill="none" /><path d="M743 418l8-8" stroke="#2f8fd6" stroke-width="1" fill="none" /><path d="M743 443v-3a8 8 0 0 1 8-8h9" stroke="#2f8fd6" stroke-width="1" fill="none" /><path d="M728.300 82.300l2.500-2.500 2.500 2.500" stroke="#333" stroke-width="1.2" fill="none" /><path d="M727.800 424l2.800 2.800 2.800-2.800" stroke="#333" stroke-width="1.3" fill="none" /><rect x="726.5" y="247.5" width="9.5" height="10.5" fill="#cdcdcd" stroke="none" stroke-width="1" rx="0" /><path d="M37.500 434.500l-2.600 2.600 2.600 2.600" stroke="#333" stroke-width="1.3" fill="none" /><rect x="372.5" y="432.5" width="10.5" height="9.5" fill="#cdcdcd" stroke="none" stroke-width="1" rx="0" /><path d="M5 446.5h10" stroke="#666" stroke-width="1" fill="none" stroke-dasharray="1 1"/><path d="M5 448.5h10" stroke="#666" stroke-width="1" fill="none" stroke-dasharray="1 1"/><path d="M7.200 453.200l4.600 4.600M11.800 453.200l-4.600 4.600" stroke="#444" stroke-width="1.1" fill="none" /><path d="M5.500 474.500l5-5a2.600 2.600 0 0 1 3.300-3.200l-1.600 1.700 1.400 1.400 1.700-1.600a2.600 2.600 0 0 1-3.300 3.200l-5 5z" stroke="#555" stroke-width="0.8" fill="#e8e8e8" /><rect x="21.5" y="469.5" width="8.5" height="6.5" fill="#fff" stroke="#444" stroke-width="1" rx="0" /><rect x="21.5" y="469.5" width="8.5" height="1.6" fill="#444" stroke="none" stroke-width="1" rx="0" /><path d="M23 472.500l1.300 1-1.300 1M25.300 474.800h2" stroke="#444" stroke-width="0.7" fill="none" /><path d="M32.1 472.25h3.0l-1.5 1.6500000000000001z" fill="#444"/><path d="M447 485.500h9.500M447 488h9.500M447 490.500h9.500M449.300 483.200v9.500M451.800 483.200v9.500M454.300 483.200v9.500" stroke="#3c3c3c" stroke-width="0.9" fill="none" /><circle cx="463.5" cy="484.6" r="0.65" fill="#555" stroke="none" stroke-width="1" /><circle cx="463.5" cy="487.8" r="0.65" fill="#555" stroke="none" stroke-width="1" /><circle cx="463.5" cy="491.0" r="0.65" fill="#555" stroke="none" stroke-width="1" /><circle cx="466.7" cy="484.6" r="0.65" fill="#555" stroke="none" stroke-width="1" /><circle cx="466.7" cy="487.8" r="0.65" fill="#555" stroke="none" stroke-width="1" /><circle cx="466.7" cy="491.0" r="0.65" fill="#555" stroke="none" stroke-width="1" /><circle cx="469.9" cy="484.6" r="0.65" fill="#555" stroke="none" stroke-width="1" /><circle cx="469.9" cy="487.8" r="0.65" fill="#555" stroke="none" stroke-width="1" /><circle cx="469.9" cy="491.0" r="0.65" fill="#555" stroke="none" stroke-width="1" /><path d="M477.4 487.7h3.2l-1.6 1.7600000000000002z" fill="#444"/><path d="M489 483.500v8.500h8" stroke="#3c3c3c" stroke-width="1.1" fill="none" /><rect x="489" y="489" width="3" height="3" fill="none" stroke="#3c3c3c" stroke-width="0.7" rx="0" /><circle cx="507" cy="488.5" r="4" fill="none" stroke="#555" stroke-width="1" /><path d="M507 488.500h5.500M507 488.500l4-4.500" stroke="#555" stroke-width="0.9" fill="none" /><path d="M518.4 487.7h3.2l-1.6 1.7600000000000002z" fill="#444"/><path d="M527.500 483.500l7 10M531 483v10.500M534.500 486l-6 4" stroke="#555" stroke-width="0.9" fill="none" /><path d="M542.6999999999999 487.7h3.2l-1.6 1.7600000000000002z" fill="#444"/><path d="M551.500 492.500h9.500M551.500 492.500l8.500-8.500" stroke="#3c3c3c" stroke-width="1" fill="none" /><path d="M552 489.500h4" stroke="#3c3c3c" stroke-width="0.7" fill="none" /><rect x="567.5" y="485" width="8.5" height="7.5" fill="none" stroke="#3c3c3c" stroke-width="1" rx="0" /><rect x="566" y="483.5" width="3" height="3" fill="#cfe2f5" stroke="#3c3c3c" stroke-width="0.8" rx="0" /><path d="M582.6999999999999 487.7h3.2l-1.6 1.7600000000000002z" fill="#444"/><path d="M597 483.500l-4.200 9.200h2.200l2-4 2 4h2.200z" fill="#2e2e2e"/><path d="M597 483.500v4" stroke="#2e2e2e" stroke-width="1.2" fill="none" /><path d="M612 483.500l-4.200 9.200h2.200l2-4 2 4h2.200z" fill="#3a3a3a"/><path d="M612 483.500v4" stroke="#3a3a3a" stroke-width="1.2" fill="none" /><path d="M626.7 483.500l-4.200 9.200h2.200l2-4 2 4h2.200z" fill="#3a3a3a"/><path d="M626.7 483.500v4" stroke="#3a3a3a" stroke-width="1.2" fill="none" /><circle cx="601" cy="485.3" r="1.1" fill="none" stroke="#2e2e2e" stroke-width="0.7" /><path d="M614.500 483.300l1.800 1.500-1.200.300 1 1.500" stroke="#3a3a3a" stroke-width="0.8" fill="none" /><path d="M648.1999999999999 487.7h3.2l-1.6 1.7600000000000002z" fill="#444"/><circle cx="662.5" cy="488.5" r="2.6" fill="none" stroke="#444" stroke-width="2" /><path d="M662.500 483.800v9.400M657.800 488.500h9.400M659.200 485.200l6.600 6.600M665.800 485.200l-6.600 6.600" stroke="#444" stroke-width="1.2" fill="none" /><circle cx="662.5" cy="488.5" r="1.2" fill="#ececec" stroke="none" stroke-width="1" /><path d="M689 492v4M701 493.500l-1.500 3h3z" stroke="#444" stroke-width="1" fill="none" /><rect x="718.5" y="483.5" width="9" height="8.5" fill="none" stroke="#444" stroke-width="0.9" rx="0" /><path d="M720.500 485.500l5 4.500M720.500 490l2-2" stroke="#777" stroke-width="0.8" fill="none" /><path d="M724 489.500l4 4M728 490.500v3h-3" stroke="#d04a2a" stroke-width="1.1" fill="none" /><rect x="736.5" y="484" width="11" height="9" fill="none" stroke="#333" stroke-width="1.1" rx="0" /><path d="M739 491l2.600-2.600M745 486l-2.600 2.600" stroke="#333" stroke-width="0.9" fill="none" /><path d="M738.500 491.500v-2.500l2.500 2.500zM745.500 485.500v2.500l-2.500-2.500z" fill="#333"/><path d="M752.500 484.500h10M752.500 488.500h10M752.500 492.500h10" stroke="#333" stroke-width="1.3" fill="none" /><path fill-rule="evenodd" fill="#515151" d="M670 454h36a4 4 0 0 1 4 4v26.300a4 4 0 0 1-4 4h-36a4 4 0 0 1-4-4v-26.300a4 4 0 0 1 4-4zM670.600 457.700v19.700c2-1 4-1.400 5.800-1.100 2.800.5 5 2.600 8.600 2.100 4.600-.700 6.400-9.100 11.800-9.100 4.200 0 5.800 5.300 8.800 8.100v-19.700z"/><text x="680.600" y="473.700" font-family="Liberation Sans,Arial,sans-serif" font-weight="700" font-size="18" fill="#515151" text-anchor="middle" transform="translate(680.600 0) scale(0.800 1) translate(-680.600 0)">AI</text></svg>
</body></html>
